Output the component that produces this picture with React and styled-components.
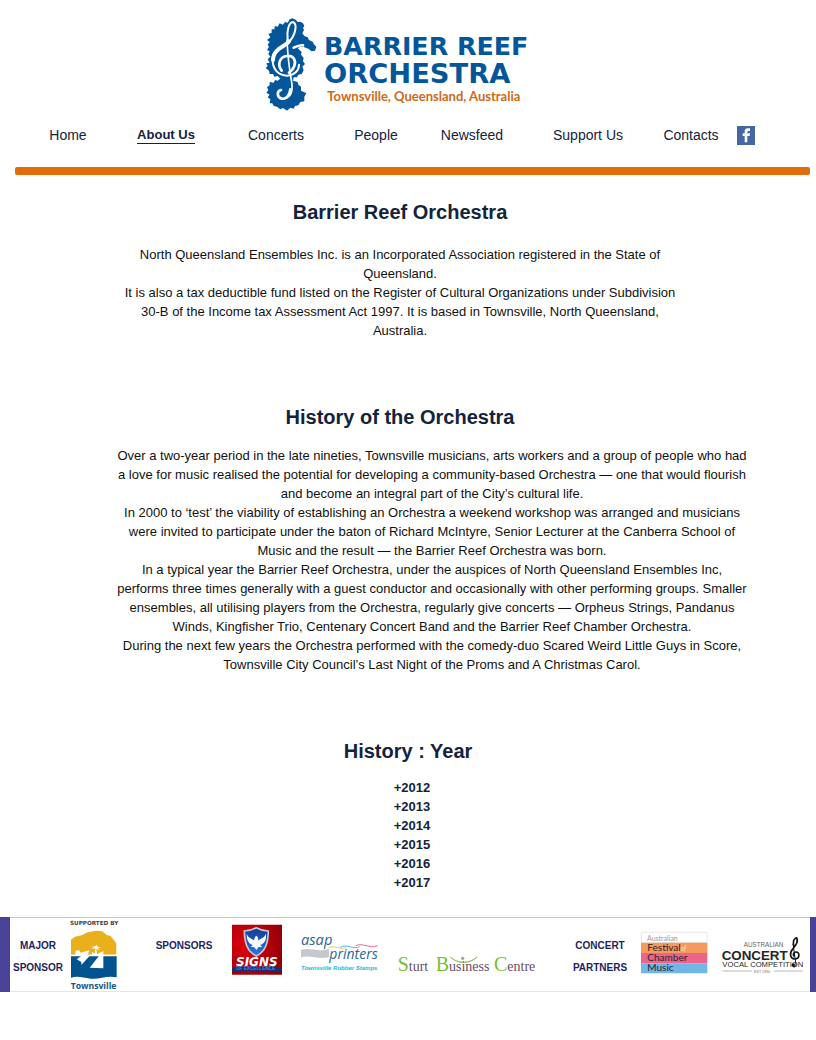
import React from "react";
import styled, { createGlobalStyle } from "styled-components";

const NAVY = "#14233c";
const BLUE = "#04569b";

const GlobalStyle = createGlobalStyle`
  * { box-sizing: border-box; }
  body {
    margin: 0;
    background: #fff;
    color: #111;
    font-family: "Liberation Sans", Arial, sans-serif;
    font-size: 13px;
    line-height: 19px;
  }
`;

const Page = styled.div`
  display: flex;
  flex-direction: column;
`;

const Header = styled.header`
  display: flex;
  flex-direction: column;
  padding: 16px 6px 0 15px;
`;

const Brand = styled.a`
  align-self: center;
  display: block;
  height: 98px;
  margin-right: 28px;
`;

const Nav = styled.nav`
  display: grid;
  grid-template-columns: 100fr 96fr 124fr 76fr 116fr 116fr 90fr 19px;
  align-items: center;
  justify-items: center;
  height: 42px;
  margin: 0 55px 0 3px;
`;

const NavLink = styled.a`
  color: ${NAVY};
  font-size: ${(p) => (p.$active ? 13 : 14)}px;
  font-weight: ${(p) => (p.$active ? 700 : 400)};
  text-decoration: none;
  line-height: 16px;
  border-bottom: 1px solid ${(p) => (p.$active ? NAVY : "transparent")};
`;

const SocialLink = styled.a`
  display: block;
  height: 19px;
`;

const Rule = styled.hr`
  width: 100%;
  height: 8px;
  margin: 11px 0 0;
  border: 0;
  border-radius: 2px;
  background: #e26b0a;
`;

const Main = styled.main`
  display: flex;
  flex-direction: column;
  padding: 22px 16px 25px 0;
  text-align: center;
`;

const Section = styled.section`
  display: flex;
  flex-direction: column;
  align-items: center;
  margin-bottom: ${(p) => p.$after || 0}px;
  padding-left: ${(p) => p.$indent || 0}px;
`;

const Heading = styled.h2`
  margin: 0 0 ${(p) => p.$gap}px;
  color: ${NAVY};
  font-size: 20px;
  line-height: 30px;
`;

const Copy = styled.div`
  max-width: ${(p) => p.$width}px;
  margin-left: ${(p) => p.$indent || 0}px;
`;

const Paragraph = styled.p`
  margin: 0;
`;

const Years = styled.ul`
  margin: 0;
  padding: 0 0 0 8px;
  list-style: none;
`;

const YearButton = styled.button`
  display: block;
  padding: 0;
  border: 0;
  background: none;
  color: ${NAVY};
  font: inherit;
  font-weight: 700;
  cursor: pointer;
`;

const Footer = styled.footer`
  display: flex;
  justify-content: space-between;
  height: 75px;
  margin-bottom: 48px;
  padding: 0 6px 0 3px;
  border: solid #4a4299;
  border-width: 0 6px 0 10px;
  box-shadow: inset 0 1px #c9cad8, inset 0 -1px #e6e6ea;
`;

const SponsorGroup = styled.div`
  display: flex;
  gap: ${(p) => p.$gap}px;
`;

const SponsorLabel = styled.h3`
  display: flex;
  flex-direction: column;
  align-items: center;
  width: ${(p) => p.$width}px;
  margin: 18px 0 0;
  color: #1d1f63;
  font-size: 10px;
  line-height: 22px;
`;

const Art = styled.svg`
  display: block;
  flex: none;
  overflow: visible;
`;

const OrchestraLogo = () => (
  <Art width="272" height="98" viewBox="36 33 816 294" role="img" aria-label="Barrier Reef Orchestra">
    <g transform="translate(30 27)">
      <path
        fill={BLUE}
        d="M86 16L94 13L104 17L110 24L118 23L126 28L130 36L126 42L129 48L124 58L130 66L140 70L144 78L156 84L158 90L166 98L162 110L152 112L142 104L128 99L116 99L110 103L122 114L120 122L128 132L126 142L132 150L124 158L128 168L122 180L112 182L108 190L98 190L96 200L110 204L112 212L120 218L120 230L136 238L130 248L130 262L118 264L112 274L102 276L98 284L88 281L78 290L66 282L58 286L48 278L38 276L34 268L26 268L28 256L20 250L26 242L16 236L22 228L18 220L26 214L26 204L38 206L42 198L50 200L58 194L50 186L40 188L36 180L26 180L24 170L14 162L20 156L16 148L26 146L20 136L28 128L22 120L26 112L18 108L24 98L20 92L26 84L18 78L28 70L22 60L32 56L32 46L40 46L42 36L50 38L56 28L66 32L72 24L80 26Z"
      />
      <g fill="none" stroke="#fff" strokeLinecap="round">
        <path strokeWidth="6" d="M80 76C76 52 84 24 96 24C110 30 104 62 84 84" />
        <path strokeWidth="12" d="M84 82C74 96 58 98 48 110C40 118 36 126 36 138" />
        <path strokeWidth="6" d="M35 136C34 166 52 184 78 185C100 184 114 170 114 152" />
        <path strokeWidth="8" d="M62 170C48 152 56 128 78 126C98 124 106 140 100 156C96 168 88 172 84 176" />
        <path strokeWidth="5" d="M78 78C80 120 84 160 91 198C96 226 94 250 70 254" />
        <path strokeWidth="8" d="M88 226C86 246 74 256 62 254C48 250 46 232 60 228" />
        <path strokeWidth="8" d="M98 101C106 97 116 93 126 94" />
      </g>
    </g>
    <g fontFamily="DejaVu Sans" fontWeight="700" fill={BLUE}>
      <text x="219" y="150" fontSize="76">BARRIER REEF</text>
      <text x="219" y="235" fontSize="82">ORCHESTRA</text>
    </g>
    <text x="229" y="289" fontFamily="Lato" fontSize="39" fontWeight="700" fill="#cf6a16">
      Townsville, Queensland, Australia
    </text>
  </Art>
);

const FacebookIcon = () => (
  <Art width="18" height="19" viewBox="0 0 54 57" role="img" aria-label="Facebook">
    <path fill="#4566a5" d="M0 0h54v57H0z" />
    <path fill="#fff" d="M23 49V30h-6v-8h6v-5c0-7 4-10 10-10h6v8h-4c-3 0-4 1-4 4v3h8l-1 8h-7v19z" />
  </Art>
);

const TownsvilleLogo = () => (
  <Art width="47" height="75" viewBox="210 36 141 225" role="img" aria-label="Supported by Townsville">
    <text x="210" y="61" fontFamily="DejaVu Sans" fontSize="17" fontWeight="700" fill="#444">SUPPORTED BY</text>
    <path fill="#eab01b" d="M213 149v-45l12-9 20-4 18-9 26-5 18 2 13 11 12 3 17 22v34z" />
    <path fill="#02548e" d="M213 153h137v64c-30-7-50 7-78 4-24-3-36-9-59-3z" />
    <path fill="#fff" d="M213 149h137v5H213zM226 138l10-3 6 8 26-7-6 16 6 2-24 26v-9l-14-8 14-10h-18zM310 138v52l-41-2 27-34h-20v-14l8 6 2-17-12 4 9-8-12-2 15 1 4-5 2 6 12 2-11 2 7 7-11-5 2 17z" />
    <text x="212" y="253" fontFamily="Open Sans" fontSize="26" fontWeight="700" fill="#11578c">Townsville</text>
  </Art>
);

const SignsLogo = () => (
  <Art width="50" height="75" viewBox="699 36 150 225" role="img" aria-label="Signs of Excellence">
    <defs>
      <radialGradient id="signsRed" cx="0.3" cy="0.4" r="0.8">
        <stop offset="0" stopColor="#e5000c" />
        <stop offset="1" stopColor="#8c0008" />
      </radialGradient>
      <linearGradient id="signsShield" x1="0" y1="0" x2="0" y2="1">
        <stop offset="0" stopColor="#143b96" />
        <stop offset="1" stopColor="#247bdc" />
      </linearGradient>
    </defs>
    <path fill="url(#signsRed)" d="M699 59h150v150H699z" />
    <path fill="url(#signsShield)" stroke="#c7cad0" strokeWidth="5" d="M736 78c15 0 25-4 36-10 11 6 21 10 36 10-1 34-7 61-36 75-29-14-35-41-36-75z" />
    <path fill="#fff" d="M743 86c5 14 14 13 22 20l3-10 4-4 4 4 2 10c9-7 17-6 23-20 1 20-4 30-18 34l7 5-12 2-6 8-6-8-11-2 7-5c-13-4-19-14-19-34z" />
    <path fill="#152d75" d="M699 186h150v12H699z" />
    <text x="711" y="183" fontFamily="DejaVu Sans" fontStyle="italic" fontSize="36" fontWeight="700" fill="#fff">SIGNS</text>
    <text x="711" y="196" fontFamily="Liberation Sans" fontSize="14" fontWeight="700" fill="#3c8be5">OF EXCELLENCE</text>
  </Art>
);

const AsapLogo = () => (
  <Art width="78" height="75" viewBox="36 36 234 225" role="img" aria-label="asap printers, Townsville Rubber Stamps">
    <path fill="#c6c8cb" d="M36 135c30-9 45 8 84-3v25c-35 8-54-8-84 0z" />
    <g fill="none" strokeWidth="3">
      <path stroke="#e9cf65" d="M118 128c20-8 34 6 54 0" />
      <path stroke="#55b6df" d="M154 127c20-12 40 8 58-2" />
      <path stroke="#e46b9f" d="M200 122c22-10 40 10 66 0" />
    </g>
    <g fontFamily="Open Sans" fontStyle="italic" fill="#2d659b">
      <text x="36" y="120" fontSize="44">asap</text>
      <text x="121" y="162" fontSize="42">printers</text>
    </g>
    <text x="36" y="194" fontFamily="Liberation Sans" fontStyle="italic" fontSize="18" fontWeight="700" fill="#25b6dc">Townsville Rubber Stamps</text>
  </Art>
);

const SturtLogo = () => (
  <Art width="137" height="75" viewBox="321 36 411 225" role="img" aria-label="Sturt Business Centre">
    <g fontFamily="Liberation Serif" fontSize="42" fill="#6c4a65">
      <text x="320" y="199"><tspan fontSize="60" fill="#79bd37">S</tspan>turt</text>
      <text x="434" y="199"><tspan fontSize="60" fill="#79bd37">B</tspan>usiness</text>
      <text x="609" y="199"><tspan fontSize="60" fill="#79bd37">C</tspan>entre</text>
    </g>
    <path fill="#79bd37" d="M478 156c20 21 56 23 80 0-22 21-58 21-80 0z" stroke="#79bd37" strokeWidth="2" />
    <circle cx="515" cy="160" r="5" fill="#a2a3a6" />
  </Art>
);

const FestivalLogo = () => (
  <Art width="67" height="75" viewBox="304 36 201 225" role="img" aria-label="Australian Festival of Chamber Music">
    <path fill="#fff" stroke="#dedede" strokeWidth="2" d="M305 82h197v31H305z" />
    <path fill="#f39a5c" d="M304 113h199v31H304z" />
    <path fill="#ec638b" d="M304 144h199v31H304z" />
    <path fill="#70b6e6" d="M304 175h199v30H304z" />
    <g fontFamily="Lato" fontSize="30" fill="#262329">
      <text x="322" y="107" fontSize="21" fill="#999">Australian</text>
      <text x="323" y="137">Festival<tspan fontSize="20" fontStyle="italic" fill="#ffe2bd">of</tspan></text>
      <text x="323" y="168">Chamber</text>
      <text x="323" y="198">Music</text>
    </g>
  </Art>
);

const ConcertoLogo = () => (
  <Art width="82" height="75" viewBox="546 36 246 225" role="img" aria-label="Australian Concerto Vocal Competition">
    <g fontFamily="Liberation Sans" fill="#262626">
      <text x="611" y="126" fontSize="19" fill="#666">AUSTRALIAN</text>
      <text x="545" y="164" fontSize="40" fontWeight="700">CONCERT</text>
      <text x="547" y="187" fontSize="23">VOCAL COMPETITION</text>
      <text x="642" y="203" fontSize="11" fill="#777">EST 1980</text>
    </g>
    <path stroke="#999" strokeWidth="2" d="M547 198h89M702 198h86" />
    <g fill="none" stroke="#151515" strokeWidth="5">
      <path d="M763 126c-6-16-2-25 6-28 8 9-2 25-10 33-11 12-10 30 5 31 16 0 17-22 3-21-9 2-8 11-4 14" />
      <path strokeWidth="3" d="M759 117l9 62c1 9-11 9-12 1" />
    </g>
    <circle cx="760" cy="180" r="5" fill="#151515" />
  </Art>
);

const LINKS = ["Home", "About Us", "Concerts", "People", "Newsfeed", "Support Us", "Contacts"];
const YEARS = [2012, 2013, 2014, 2015, 2016, 2017];

export default function App() {
  return (
    <Page>
      <GlobalStyle />
      <Header>
        <Brand href="#home">
          <OrchestraLogo />
        </Brand>
        <Nav aria-label="Main">
          {LINKS.map((label) => (
            <NavLink key={label} href="#" $active={label === "About Us"}>
              {label}
            </NavLink>
          ))}
          <SocialLink href="#facebook">
            <FacebookIcon />
          </SocialLink>
        </Nav>
        <Rule />
      </Header>
      <Main>
        <Section $after={62}>
          <Heading $gap={18}>Barrier Reef Orchestra</Heading>
          <Copy $width={570}>
            <Paragraph>
              North Queensland Ensembles Inc. is an Incorporated Association registered in the State of
              Queensland.
            </Paragraph>
            <Paragraph>
              It is also a tax deductible fund listed on the Register of Cultural Organizations under
              Subdivision 30-B of the Income tax Assessment Act 1997. It is based in Townsville, North
              Queensland, Australia.
            </Paragraph>
          </Copy>
        </Section>
        <Section $after={62}>
          <Heading $gap={14}>History of the Orchestra</Heading>
          <Copy $width={633} $indent={64}>
            <Paragraph>
              Over a two-year period in the late nineties, Townsville musicians, arts workers and a group
              of people who had a love for music realised the potential for developing a community-based
              Orchestra — one that would flourish and become an integral part of the City’s cultural life.
            </Paragraph>
            <Paragraph>
              In 2000 to ‘test’ the viability of establishing an Orchestra a weekend workshop was arranged
              and musicians were invited to participate under the baton of Richard McIntyre, Senior
              Lecturer at the Canberra School of Music and the result — the Barrier Reef Orchestra was
              born.
            </Paragraph>
            <Paragraph>
              In a typical year the Barrier Reef Orchestra, under the auspices of North Queensland
              Ensembles Inc, performs three times generally with a guest conductor and occasionally with
              other performing groups. Smaller ensembles, all utilising players from the Orchestra,
              regularly give concerts — Orpheus Strings, Pandanus Winds, Kingfisher Trio, Centenary
              Concert Band and the Barrier Reef Chamber Orchestra.
            </Paragraph>
            <Paragraph>
              During the next few years the Orchestra performed with the comedy-duo Scared Weird Little
              Guys in Score, Townsville City Council’s Last Night of the Proms and A Christmas Carol.
            </Paragraph>
          </Copy>
        </Section>
        <Section $indent={16}>
          <Heading $gap={12}>History : Year</Heading>
          <Years>
            {YEARS.map((year) => (
              <li key={year}>
                <YearButton type="button">+{year}</YearButton>
              </li>
            ))}
          </Years>
        </Section>
      </Main>
      <Footer>
        <SponsorGroup $gap={7}>
          <SponsorLabel $width={50}>
            <span>MAJOR</span>
            <span>SPONSOR</span>
          </SponsorLabel>
          <TownsvilleLogo />
        </SponsorGroup>
        <SponsorGroup $gap={19}>
          <SponsorLabel $width={58}>
            <span>SPONSORS</span>
          </SponsorLabel>
          <SignsLogo />
          <AsapLogo />
          <SturtLogo />
        </SponsorGroup>
        <SponsorGroup $gap={14}>
          <SponsorLabel $width={54}>
            <span>CONCERT</span>
            <span>PARTNERS</span>
          </SponsorLabel>
          <FestivalLogo />
          <ConcertoLogo />
        </SponsorGroup>
      </Footer>
    </Page>
  );
}
